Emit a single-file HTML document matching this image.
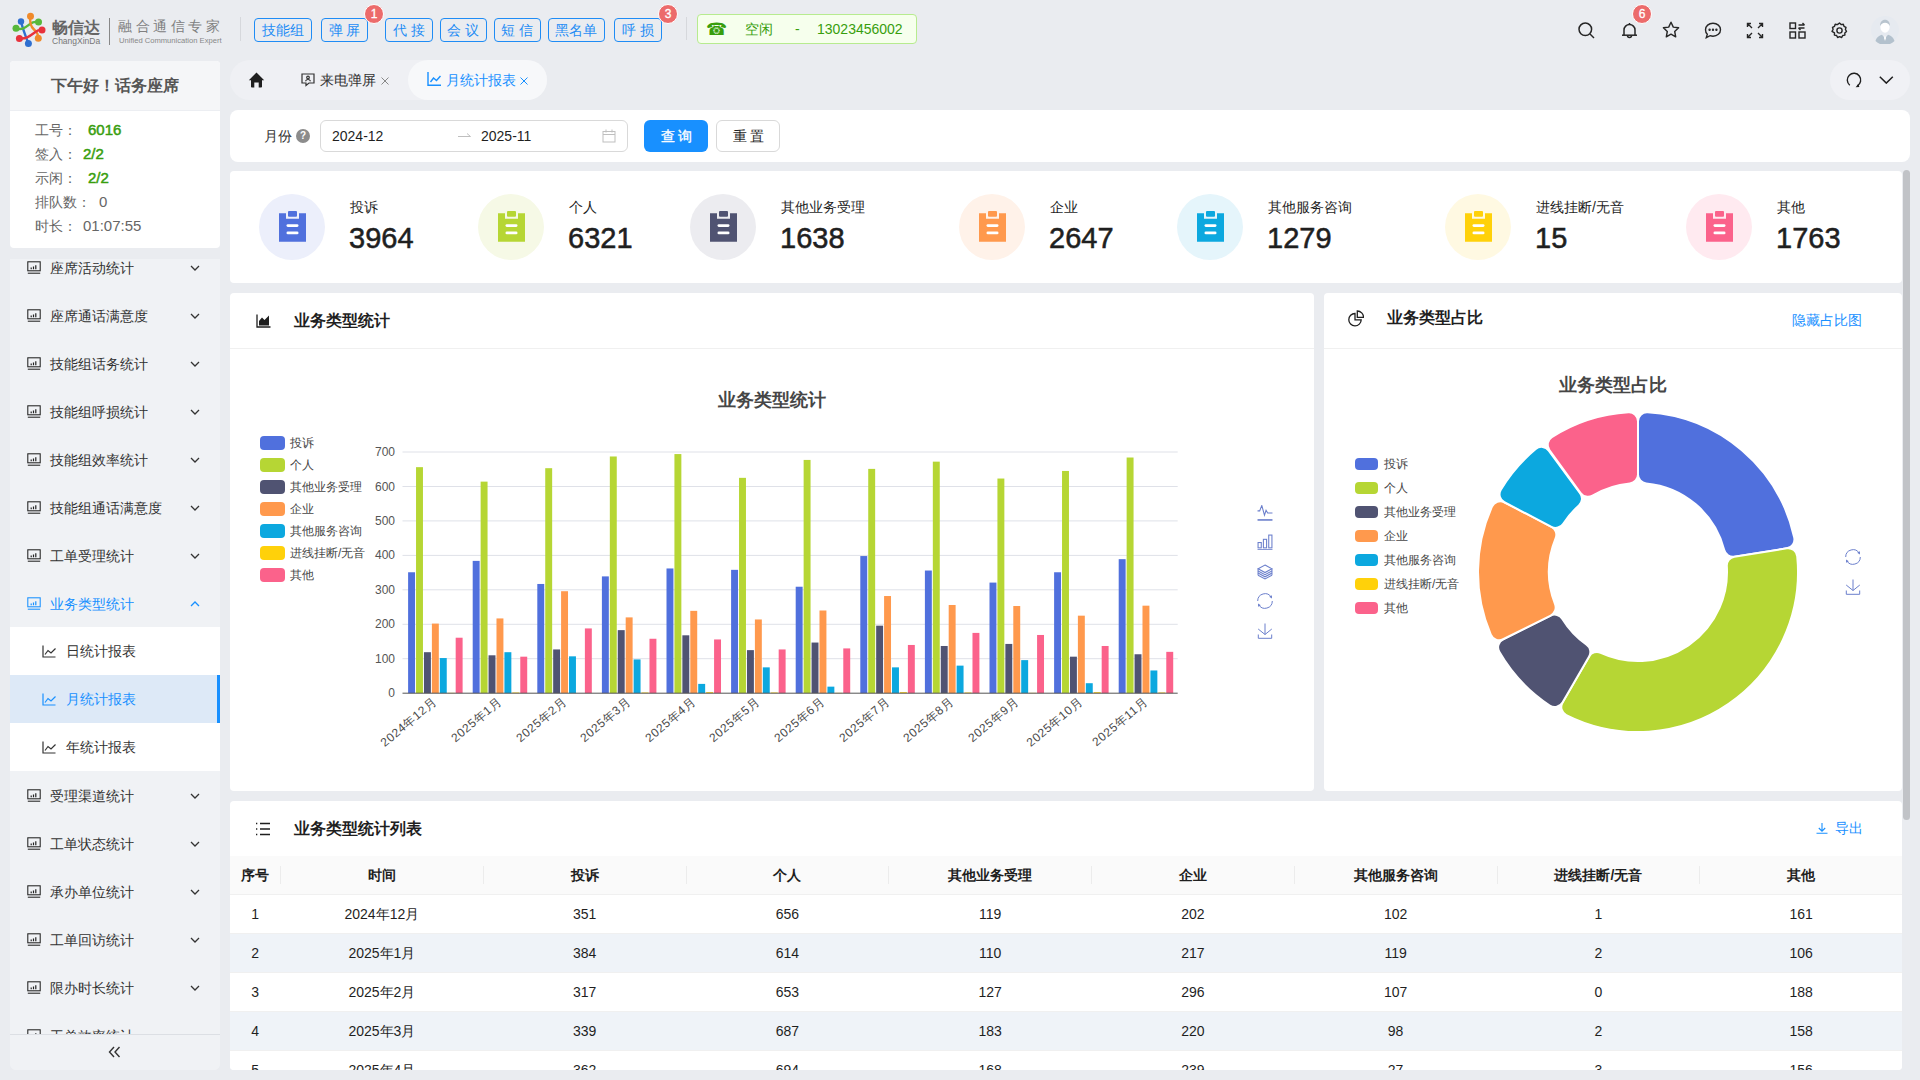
<!DOCTYPE html><html><head><meta charset="utf-8"><style>
*{margin:0;padding:0;box-sizing:border-box}
svg{display:block}
html,body{width:1920px;height:1080px;overflow:hidden}
body{background:#eaecf0;font-family:"Liberation Sans",sans-serif;color:#333;position:relative;font-size:14px}
.a{position:absolute}
.nw{white-space:nowrap}
.hbtn{position:absolute;top:18px;height:24px;border:1px solid #1f8cf5;border-radius:4px;color:#1f8cf5;font-size:14px;line-height:22px;text-align:center;white-space:nowrap}
.badge{position:absolute;width:20px;height:20px;border-radius:10px;background:#ec6b6b;border:1px solid #fff;color:#fff;font-size:12px;line-height:18px;text-align:center;-webkit-text-stroke:0.3px #fff}
.card{position:absolute;background:#fff;border-radius:4px}
.mi{position:absolute;left:10px;width:210px;height:48px}
.mi .ic{position:absolute;left:17px;top:16.5px}
.mi .tx{position:absolute;left:40px;top:0;line-height:48px;font-size:14px;color:#333;white-space:nowrap}
.mi .chev{position:absolute;left:180px;top:20.5px}
.si{position:absolute;left:10px;width:210px;height:48px;background:#fff}
.si .ic{position:absolute;left:32px;top:18px}
.si .tx{position:absolute;left:56px;top:0;line-height:48px;font-size:14px;color:#333;white-space:nowrap}
.th{position:absolute;top:856px;height:38px;line-height:38px;text-align:center;font-weight:bold;font-size:14px;color:#1f1f1f;white-space:nowrap}
.td{position:absolute;height:39px;line-height:39px;text-align:center;font-size:14px;color:#1f1f1f;white-space:nowrap}
.lg{position:absolute;font-size:12px;color:#464646;white-space:nowrap;line-height:14px}
.lg i{position:absolute;width:25px;height:14px;border-radius:4px;left:0;top:0}
.lg span{position:absolute;left:30px;top:0}
</style></head><body>
<svg class="a" style="left:10px;top:11px" width="40" height="40" viewBox="10 11 40 40">
<path d="M21 21.5 C23 30, 25 34, 28.4 43.6" stroke="#2f6fd0" stroke-width="2.4" fill="none"/>
<path d="M16 28.3 C22 30.5, 26 27, 30 24 S35 22, 38.5 22" stroke="#58b83a" stroke-width="2.4" fill="none"/>
<path d="M30.5 16.3 C29.5 22, 30 26, 34 29.5 S38 35, 38.3 38.3" stroke="#f08a2a" stroke-width="2.4" fill="none"/>
<path d="M19.4 38.4 C26 39, 30 36, 34 33 S38.5 30, 42 30" stroke="#e8323c" stroke-width="2.4" fill="none"/>
<circle cx="30.5" cy="16.3" r="3.5" fill="#f08a2a"/><circle cx="21" cy="21.5" r="3.2" fill="#2f6fd0"/>
<circle cx="16" cy="28.3" r="3.5" fill="#58b83a"/><circle cx="38.5" cy="22" r="3.5" fill="#58b83a"/>
<circle cx="42" cy="30" r="3.5" fill="#e8323c"/><circle cx="38.3" cy="38.3" r="3.5" fill="#f08a2a"/>
<circle cx="19.4" cy="38.4" r="3.5" fill="#e8323c"/><circle cx="28.4" cy="43.6" r="3.5" fill="#2f6fd0"/>
</svg>
<div class="a nw" style="left:52px;top:17px;font-size:16px;font-weight:bold;color:#666;line-height:22px;letter-spacing:0px">畅信达</div>
<div class="a nw" style="left:52px;top:36px;font-size:8.5px;color:#777;line-height:10px">ChangXinDa</div>
<div class="a" style="left:109px;top:18px;width:1px;height:27px;background:#888"></div>
<div class="a nw" style="left:118px;top:17px;font-family:'Liberation Serif',serif;font-size:14px;color:#808080;line-height:20px;letter-spacing:3.5px">融合通信专家</div>
<div class="a nw" style="left:119px;top:36px;font-size:7.6px;color:#888;line-height:10px">Unified Communication Expert</div>
<div class="a" style="left:240px;top:17px;width:1px;height:24px;background:#d6d8dc"></div>
<div class="hbtn" style="left:254px;width:58px">技能组</div>
<div class="hbtn" style="left:321px;width:47px">弹 屏</div>
<div class="hbtn" style="left:385px;width:48px">代 接</div>
<div class="hbtn" style="left:439.5px;width:47px">会 议</div>
<div class="hbtn" style="left:493.5px;width:47px">短 信</div>
<div class="hbtn" style="left:547.5px;width:57px">黑名单</div>
<div class="hbtn" style="left:614px;width:48px">呼 损</div>
<div class="badge" style="left:364px;top:4px">1</div>
<div class="badge" style="left:658px;top:4px">3</div>
<div class="a" style="left:686px;top:17px;width:1px;height:23px;background:#d6d8dc"></div>
<div class="a" style="left:697px;top:14px;width:220px;height:30px;background:#f6ffed;border:1px solid #b7eb8f;border-radius:4px"></div>
<div class="a nw" style="left:706px;top:20px;font-size:17px;color:#389e0d;line-height:20px">☎</div>
<div class="a nw" style="left:745px;top:19px;font-size:14px;color:#389e0d;line-height:20px">空闲</div>
<div class="a nw" style="left:795px;top:19px;font-size:14px;color:#389e0d;line-height:20px">-</div>
<div class="a nw" style="left:817px;top:19px;font-size:14px;color:#389e0d;line-height:20px">13023456002</div>
<svg class="a" style="left:1578px;top:22px" width="17" height="17" viewBox="0 0 17 17" fill="none" stroke="#262626" stroke-width="1.5"><circle cx="7.3" cy="7.3" r="6.3"/><path d="M12 12l4 4"/></svg>
<svg class="a" style="left:1621px;top:22px" width="17" height="17" viewBox="0 0 17 17" fill="none" stroke="#262626" stroke-width="1.5"><path d="M3 13V8a5.5 5.5 0 0 1 11 0v5"/><path d="M1 13.2h15"/><path d="M6.5 13.5a2 2 0 0 0 4 0"/><path d="M8.5 1v1.5"/></svg>
<div class="badge" style="left:1632px;top:4px">6</div>
<svg class="a" style="left:1662px;top:21px" width="18" height="17" viewBox="0 0 18 17" fill="none" stroke="#262626" stroke-width="1.4" stroke-linejoin="round"><path d="M9 1.2l2.3 4.9 5.3.7-3.9 3.7 1 5.3L9 13.2l-4.7 2.6 1-5.3L1.4 6.8l5.3-.7z"/></svg>
<svg class="a" style="left:1704px;top:22px" width="18" height="17" viewBox="0 0 18 17" fill="none" stroke="#262626" stroke-width="1.4"><path d="M9 1.2c4.3 0 7.5 2.9 7.5 6.5S13.3 14.2 9 14.2c-1 0-2-.2-2.9-.5L2.3 15.6l1-3.3C2 11.1 1.5 9.5 1.5 7.7 1.5 4.1 4.7 1.2 9 1.2z"/><circle cx="5.6" cy="7.8" r=".5" fill="#262626"/><circle cx="9" cy="7.8" r=".5" fill="#262626"/><circle cx="12.4" cy="7.8" r=".5" fill="#262626"/></svg>
<svg class="a" style="left:1746px;top:22px" width="18" height="17" viewBox="0 0 18 17" fill="none" stroke="#262626" stroke-width="1.4"><path d="M1.5 5V1.5H5M1.5 1.5l4.5 4.5M16.5 5V1.5H13M16.5 1.5L12 6M1.5 12v3.5H5M1.5 15.5L6 11M16.5 12v3.5H13M16.5 15.5L12 11"/></svg>
<svg class="a" style="left:1789px;top:22px" width="17" height="17" viewBox="0 0 17 17" fill="none" stroke="#262626" stroke-width="1.4"><rect x="1" y="1" width="5.5" height="5.5"/><rect x="1" y="10" width="5.5" height="6"/><rect x="10" y="10" width="6" height="6"/><path d="M9.5 3h6M9.5 6h6M13.5 1l2 2M11.5 8l-2-2"/></svg>
<svg class="a" style="left:1831px;top:22px" width="17" height="17" viewBox="0 0 17 17" fill="none" stroke="#262626" stroke-width="1.4"><path d="M8.5 1l1.6 1.6 2.2-.4.7 2.1 2 1-.6 2.2 1.1 1.9-1.7 1.5.1 2.2-2.2.4-1 2-2.1-.8-2 .8-1-2-2.2-.4.1-2.2L1 9.4l1.1-1.9-.6-2.2 2-1 .7-2.1 2.2.4z" stroke-linejoin="round"/><circle cx="8.5" cy="8.5" r="2.6"/></svg>
<svg class="a" style="left:1871px;top:16px" width="28" height="28" viewBox="0 0 28 28"><circle cx="14" cy="14" r="14" fill="#e6eaf0"/><path d="M4.5 25c1-4 4-5.5 6.5-6.3l3 3.5 3-3.5c2.5.8 5.5 2.3 6.5 6.3A13.5 13.5 0 0 1 4.5 25z" fill="#b3c1cd"/><path d="M13 22l1-2.5 1 2.5-1 3z" fill="#fff"/><ellipse cx="14" cy="11" rx="4.6" ry="5.8" fill="#fff"/><path d="M9 10c0-4 2-6.3 5-6.3s5 2.3 5 6.3c-1-1.8-2.5-3-5-3.2-2.2.2-4 1.2-5 3.2z" fill="#b8c4ce"/></svg>
<div class="a" style="left:10px;top:61px;width:209.5px;height:187px;background:#fff;border-radius:4px;overflow:hidden"><div class="a" style="left:0;top:0;width:210px;height:50px;background:#f5f6f8;border-bottom:1px solid #eceef2"></div><div class="a nw" style="left:0;top:14px;width:210px;text-align:center;font-size:16px;font-weight:bold;color:#555;line-height:22px">下午好！话务座席</div></div>
<div class="a nw" style="left:35px;top:119px;font-size:14px;color:#666;line-height:22px">工号：</div>
<div class="a nw" style="left:88px;top:119px;font-size:15px;color:#389e0d;-webkit-text-stroke:0.5px #389e0d;line-height:22px">6016</div>
<div class="a nw" style="left:35px;top:143px;font-size:14px;color:#666;line-height:22px">签入：</div>
<div class="a nw" style="left:83px;top:143px;font-size:15px;color:#389e0d;-webkit-text-stroke:0.5px #389e0d;line-height:22px">2/2</div>
<div class="a nw" style="left:35px;top:167px;font-size:14px;color:#666;line-height:22px">示闲：</div>
<div class="a nw" style="left:88px;top:167px;font-size:15px;color:#389e0d;-webkit-text-stroke:0.5px #389e0d;line-height:22px">2/2</div>
<div class="a nw" style="left:35px;top:191px;font-size:14px;color:#666;line-height:22px">排队数：</div>
<div class="a nw" style="left:99px;top:191px;font-size:15px;color:#666;line-height:22px">0</div>
<div class="a nw" style="left:35px;top:215px;font-size:14px;color:#666;line-height:22px">时长：</div>
<div class="a nw" style="left:83px;top:215px;font-size:15px;color:#666;line-height:22px">01:07:55</div>
<div class="a" style="left:10px;top:259px;width:210px;height:811px;background:#f0f2f5;border-radius:0 0 6px 6px;overflow:hidden"></div>
<div class="mi" style="top:244px"><div class="ic"><svg width="14" height="13" viewBox="0 0 14 13" fill="none" stroke="#222" stroke-width="1.05"><rect x="0.8" y="0.8" width="12.4" height="9"/><path d="M0.8 12.2h12.4"/><path d="M4.2 8.2v-1.6M6.5 8.2v-2.8M8.8 8.2v-4" stroke-width="1.2"/></svg></div><div class="tx">座席活动统计</div><div class="chev"><svg width="10" height="6" viewBox="0 0 10 6" fill="none" stroke="#333" stroke-width="1.3"><path d="M1 1l4 4 4-4"/></svg></div></div>
<div class="mi" style="top:292px"><div class="ic"><svg width="14" height="13" viewBox="0 0 14 13" fill="none" stroke="#222" stroke-width="1.05"><rect x="0.8" y="0.8" width="12.4" height="9"/><path d="M0.8 12.2h12.4"/><path d="M4.2 8.2v-1.6M6.5 8.2v-2.8M8.8 8.2v-4" stroke-width="1.2"/></svg></div><div class="tx">座席通话满意度</div><div class="chev"><svg width="10" height="6" viewBox="0 0 10 6" fill="none" stroke="#333" stroke-width="1.3"><path d="M1 1l4 4 4-4"/></svg></div></div>
<div class="mi" style="top:340px"><div class="ic"><svg width="14" height="13" viewBox="0 0 14 13" fill="none" stroke="#222" stroke-width="1.05"><rect x="0.8" y="0.8" width="12.4" height="9"/><path d="M0.8 12.2h12.4"/><path d="M4.2 8.2v-1.6M6.5 8.2v-2.8M8.8 8.2v-4" stroke-width="1.2"/></svg></div><div class="tx">技能组话务统计</div><div class="chev"><svg width="10" height="6" viewBox="0 0 10 6" fill="none" stroke="#333" stroke-width="1.3"><path d="M1 1l4 4 4-4"/></svg></div></div>
<div class="mi" style="top:388px"><div class="ic"><svg width="14" height="13" viewBox="0 0 14 13" fill="none" stroke="#222" stroke-width="1.05"><rect x="0.8" y="0.8" width="12.4" height="9"/><path d="M0.8 12.2h12.4"/><path d="M4.2 8.2v-1.6M6.5 8.2v-2.8M8.8 8.2v-4" stroke-width="1.2"/></svg></div><div class="tx">技能组呼损统计</div><div class="chev"><svg width="10" height="6" viewBox="0 0 10 6" fill="none" stroke="#333" stroke-width="1.3"><path d="M1 1l4 4 4-4"/></svg></div></div>
<div class="mi" style="top:436px"><div class="ic"><svg width="14" height="13" viewBox="0 0 14 13" fill="none" stroke="#222" stroke-width="1.05"><rect x="0.8" y="0.8" width="12.4" height="9"/><path d="M0.8 12.2h12.4"/><path d="M4.2 8.2v-1.6M6.5 8.2v-2.8M8.8 8.2v-4" stroke-width="1.2"/></svg></div><div class="tx">技能组效率统计</div><div class="chev"><svg width="10" height="6" viewBox="0 0 10 6" fill="none" stroke="#333" stroke-width="1.3"><path d="M1 1l4 4 4-4"/></svg></div></div>
<div class="mi" style="top:484px"><div class="ic"><svg width="14" height="13" viewBox="0 0 14 13" fill="none" stroke="#222" stroke-width="1.05"><rect x="0.8" y="0.8" width="12.4" height="9"/><path d="M0.8 12.2h12.4"/><path d="M4.2 8.2v-1.6M6.5 8.2v-2.8M8.8 8.2v-4" stroke-width="1.2"/></svg></div><div class="tx">技能组通话满意度</div><div class="chev"><svg width="10" height="6" viewBox="0 0 10 6" fill="none" stroke="#333" stroke-width="1.3"><path d="M1 1l4 4 4-4"/></svg></div></div>
<div class="mi" style="top:532px"><div class="ic"><svg width="14" height="13" viewBox="0 0 14 13" fill="none" stroke="#222" stroke-width="1.05"><rect x="0.8" y="0.8" width="12.4" height="9"/><path d="M0.8 12.2h12.4"/><path d="M4.2 8.2v-1.6M6.5 8.2v-2.8M8.8 8.2v-4" stroke-width="1.2"/></svg></div><div class="tx">工单受理统计</div><div class="chev"><svg width="10" height="6" viewBox="0 0 10 6" fill="none" stroke="#333" stroke-width="1.3"><path d="M1 1l4 4 4-4"/></svg></div></div>
<div class="mi" style="top:580px"><div class="ic"><svg width="14" height="13" viewBox="0 0 14 13" fill="none" stroke="#1890ff" stroke-width="1.05"><rect x="0.8" y="0.8" width="12.4" height="9"/><path d="M0.8 12.2h12.4"/><path d="M4.2 8.2v-1.6M6.5 8.2v-2.8M8.8 8.2v-4" stroke-width="1.2"/></svg></div><div class="tx" style="color:#1890ff">业务类型统计</div><div class="chev"><svg width="10" height="6" viewBox="0 0 10 6" fill="none" stroke="#1890ff" stroke-width="1.3"><path d="M1 5l4-4 4 4"/></svg></div></div>
<div class="a" style="left:10px;top:627px;width:210px;height:144px;background:#fff"></div>
<div class="si" style="top:627px"><div class="ic"><svg width="14" height="13" viewBox="0 0 14 13" fill="none" stroke="#333" stroke-width="1.2"><path d="M1 0.5V12h12.5"/><path d="M3 9.5l3-4 3 2.5 4.5-4.5"/></svg></div><div class="tx">日统计报表</div></div>
<div class="si" style="top:675px;background:#dde9f7"><div class="ic"><svg width="14" height="13" viewBox="0 0 14 13" fill="none" stroke="#1890ff" stroke-width="1.2"><path d="M1 0.5V12h12.5"/><path d="M3 9.5l3-4 3 2.5 4.5-4.5"/></svg></div><div class="tx" style="color:#1890ff">月统计报表</div><div class="a" style="right:0;top:0;width:3px;height:48px;background:#1890ff"></div></div>
<div class="si" style="top:723px"><div class="ic"><svg width="14" height="13" viewBox="0 0 14 13" fill="none" stroke="#333" stroke-width="1.2"><path d="M1 0.5V12h12.5"/><path d="M3 9.5l3-4 3 2.5 4.5-4.5"/></svg></div><div class="tx">年统计报表</div></div>
<div class="mi" style="top:772px"><div class="ic"><svg width="14" height="13" viewBox="0 0 14 13" fill="none" stroke="#222" stroke-width="1.05"><rect x="0.8" y="0.8" width="12.4" height="9"/><path d="M0.8 12.2h12.4"/><path d="M4.2 8.2v-1.6M6.5 8.2v-2.8M8.8 8.2v-4" stroke-width="1.2"/></svg></div><div class="tx">受理渠道统计</div><div class="chev"><svg width="10" height="6" viewBox="0 0 10 6" fill="none" stroke="#333" stroke-width="1.3"><path d="M1 1l4 4 4-4"/></svg></div></div>
<div class="mi" style="top:820px"><div class="ic"><svg width="14" height="13" viewBox="0 0 14 13" fill="none" stroke="#222" stroke-width="1.05"><rect x="0.8" y="0.8" width="12.4" height="9"/><path d="M0.8 12.2h12.4"/><path d="M4.2 8.2v-1.6M6.5 8.2v-2.8M8.8 8.2v-4" stroke-width="1.2"/></svg></div><div class="tx">工单状态统计</div><div class="chev"><svg width="10" height="6" viewBox="0 0 10 6" fill="none" stroke="#333" stroke-width="1.3"><path d="M1 1l4 4 4-4"/></svg></div></div>
<div class="mi" style="top:868px"><div class="ic"><svg width="14" height="13" viewBox="0 0 14 13" fill="none" stroke="#222" stroke-width="1.05"><rect x="0.8" y="0.8" width="12.4" height="9"/><path d="M0.8 12.2h12.4"/><path d="M4.2 8.2v-1.6M6.5 8.2v-2.8M8.8 8.2v-4" stroke-width="1.2"/></svg></div><div class="tx">承办单位统计</div><div class="chev"><svg width="10" height="6" viewBox="0 0 10 6" fill="none" stroke="#333" stroke-width="1.3"><path d="M1 1l4 4 4-4"/></svg></div></div>
<div class="mi" style="top:916px"><div class="ic"><svg width="14" height="13" viewBox="0 0 14 13" fill="none" stroke="#222" stroke-width="1.05"><rect x="0.8" y="0.8" width="12.4" height="9"/><path d="M0.8 12.2h12.4"/><path d="M4.2 8.2v-1.6M6.5 8.2v-2.8M8.8 8.2v-4" stroke-width="1.2"/></svg></div><div class="tx">工单回访统计</div><div class="chev"><svg width="10" height="6" viewBox="0 0 10 6" fill="none" stroke="#333" stroke-width="1.3"><path d="M1 1l4 4 4-4"/></svg></div></div>
<div class="mi" style="top:964px"><div class="ic"><svg width="14" height="13" viewBox="0 0 14 13" fill="none" stroke="#222" stroke-width="1.05"><rect x="0.8" y="0.8" width="12.4" height="9"/><path d="M0.8 12.2h12.4"/><path d="M4.2 8.2v-1.6M6.5 8.2v-2.8M8.8 8.2v-4" stroke-width="1.2"/></svg></div><div class="tx">限办时长统计</div><div class="chev"><svg width="10" height="6" viewBox="0 0 10 6" fill="none" stroke="#333" stroke-width="1.3"><path d="M1 1l4 4 4-4"/></svg></div></div>
<div class="mi" style="top:1012px"><div class="ic"><svg width="14" height="13" viewBox="0 0 14 13" fill="none" stroke="#222" stroke-width="1.05"><rect x="0.8" y="0.8" width="12.4" height="9"/><path d="M0.8 12.2h12.4"/><path d="M4.2 8.2v-1.6M6.5 8.2v-2.8M8.8 8.2v-4" stroke-width="1.2"/></svg></div><div class="tx">工单效率统计</div><div class="chev"></div></div>
<div class="a" style="left:10px;top:1034px;width:210px;height:36px;background:#f0f2f5;border-top:1px solid #dcdfe4;border-radius:0 0 6px 6px"></div>
<svg class="a" style="left:108px;top:1046px" width="13" height="12" viewBox="0 0 13 12" fill="none" stroke="#333" stroke-width="1.4"><path d="M6 1L1.5 6 6 11M11.5 1L7 6l4.5 5"/></svg>
<div class="a" style="left:230px;top:60px;width:317px;height:40px;background:#eff0f4;border-radius:20px"></div>
<div class="a" style="left:408px;top:60px;width:139px;height:40px;background:#f7f8fa;border-radius:20px"></div>
<svg class="a" style="left:248px;top:72px" width="17" height="16" viewBox="0 0 17 16"><path d="M8.5 0.5L0.8 8.3h2.2v6.5c0 .5.4.8.8.8h2.5V10.5h4.4v5.1h2.5c.4 0 .8-.3.8-.8V8.3h2.2z" fill="#1f1f1f"/></svg>
<svg class="a" style="left:301px;top:73px" width="14" height="14" viewBox="0 0 14 14" fill="none" stroke="#333" stroke-width="1.2"><path d="M1 1h12v9H8l-3 2.5V10H1z"/><circle cx="7" cy="4.5" r="1.3"/><path d="M4.5 8.2c.5-1.2 1.4-1.7 2.5-1.7s2 .5 2.5 1.7"/></svg>
<div class="a nw" style="left:320px;top:70px;font-size:14px;color:#333;line-height:20px">来电弹屏</div>
<svg class="a" style="left:381px;top:77px" width="8" height="8" viewBox="0 0 8 8" stroke="#888" stroke-width="1"><path d="M0.5 .5l7 7M7.5 .5l-7 7"/></svg>
<svg class="a" style="left:427px;top:72px" width="14" height="14" viewBox="0 0 14 14" fill="none" stroke="#1890ff" stroke-width="1.4"><path d="M1 0v13.3h13"/><path d="M3.5 10l3-4 3 2.5 4-4.5"/></svg>
<div class="a nw" style="left:446px;top:70px;font-size:14px;color:#1890ff;line-height:20px">月统计报表</div>
<svg class="a" style="left:520px;top:77px" width="8" height="8" viewBox="0 0 8 8" stroke="#1890ff" stroke-width="1"><path d="M0.5 .5l7 7M7.5 .5l-7 7"/></svg>
<div class="a" style="left:1830px;top:60px;width:80px;height:40px;background:#f0f1f5;border-radius:20px"></div>
<svg class="a" style="left:1846px;top:72px" width="16" height="16" viewBox="0 0 16 16" fill="none" stroke="#1f1f1f" stroke-width="1.4"><path d="M3.78 13.21A6.7 6.7 0 1 1 11.35 13.8"/><path d="M9.6 15.2L13.3 15.1 12.6 11.5z" fill="#1f1f1f" stroke="none"/></svg>
<svg class="a" style="left:1879px;top:76px" width="15" height="8" viewBox="0 0 15 8" fill="none" stroke="#1f1f1f" stroke-width="1.5"><path d="M0.8 0.8l6.5 6.3L13.8 0.8"/></svg>
<div class="card" style="left:230px;top:110px;width:1680px;height:52px;border-radius:8px"></div>
<div class="a nw" style="left:264px;top:126px;font-size:14px;color:#333;line-height:20px">月份</div>
<div class="a" style="left:296px;top:129px;width:14px;height:14px;border-radius:7px;background:#8c8c8c;color:#fff;font-size:10px;line-height:14px;text-align:center;font-weight:bold">?</div>
<div class="a" style="left:320px;top:120px;width:308px;height:32px;border:1px solid #d9d9d9;border-radius:6px;background:#fff"></div>
<div class="a nw" style="left:332px;top:126px;font-size:14px;color:#1f1f1f;line-height:20px">2024-12</div>
<svg class="a" style="left:458px;top:131px" width="13" height="8" viewBox="0 0 13 8" fill="none" stroke="#bfbfbf" stroke-width="1"><path d="M0 5.5h12.5M9 2.5l3.5 3"/></svg>
<div class="a nw" style="left:481px;top:126px;font-size:14px;color:#1f1f1f;line-height:20px">2025-11</div>
<svg class="a" style="left:602px;top:129px" width="14" height="14" viewBox="0 0 14 14" fill="none" stroke="#bfbfbf" stroke-width="1"><rect x="1" y="2.5" width="12" height="10.5"/><path d="M1 5.5h12M4 0.5v3M10 0.5v3"/></svg>
<div class="a nw" style="left:644px;top:120px;width:64px;height:32px;background:#1890ff;border-radius:6px;color:#fff;font-size:14px;line-height:32px;text-align:center;-webkit-text-stroke:0.35px #fff;letter-spacing:3px;text-indent:3px">查询</div>
<div class="a nw" style="left:716px;top:120px;width:64px;height:32px;background:#fff;border:1px solid #d9d9d9;border-radius:6px;color:#1f1f1f;font-size:14px;line-height:30px;text-align:center;letter-spacing:3px;text-indent:3px">重置</div>
<div class="card" style="left:230px;top:171px;width:1672px;height:112px"></div>
<div class="a" style="left:259px;top:194px;width:66px;height:66px;border-radius:33px;background:#eceffb"></div>
<div class="a" style="left:279px;top:211px"><svg width="27" height="31" viewBox="0 0 27 31"><path d="M0 2.2h7v5.6h13V2.2h7V30.7H0z" fill="#5070dd"/><rect x="9" y="0" width="9" height="5.7" rx="1" fill="#5070dd"/><rect x="7.5" y="13.3" width="12" height="2.6" rx="1.3" fill="#fff"/><rect x="7.5" y="20.6" width="12" height="2.6" rx="1.3" fill="#fff"/></svg></div>
<div class="a nw" style="left:350px;top:197px;font-size:14px;color:#1f1f1f;line-height:20px">投诉</div>
<div class="a nw" style="left:349px;top:220px;font-size:29px;color:#1f1f1f;line-height:36px;-webkit-text-stroke:0.55px #1f1f1f">3964</div>
<div class="a" style="left:478px;top:194px;width:66px;height:66px;border-radius:33px;background:#f6f9e6"></div>
<div class="a" style="left:498px;top:211px"><svg width="27" height="31" viewBox="0 0 27 31"><path d="M0 2.2h7v5.6h13V2.2h7V30.7H0z" fill="#b6d634"/><rect x="9" y="0" width="9" height="5.7" rx="1" fill="#b6d634"/><rect x="7.5" y="13.3" width="12" height="2.6" rx="1.3" fill="#fff"/><rect x="7.5" y="20.6" width="12" height="2.6" rx="1.3" fill="#fff"/></svg></div>
<div class="a nw" style="left:569px;top:197px;font-size:14px;color:#1f1f1f;line-height:20px">个人</div>
<div class="a nw" style="left:568px;top:220px;font-size:29px;color:#1f1f1f;line-height:36px;-webkit-text-stroke:0.55px #1f1f1f">6321</div>
<div class="a" style="left:690px;top:194px;width:66px;height:66px;border-radius:33px;background:#ececf0"></div>
<div class="a" style="left:710px;top:211px"><svg width="27" height="31" viewBox="0 0 27 31"><path d="M0 2.2h7v5.6h13V2.2h7V30.7H0z" fill="#505372"/><rect x="9" y="0" width="9" height="5.7" rx="1" fill="#505372"/><rect x="7.5" y="13.3" width="12" height="2.6" rx="1.3" fill="#fff"/><rect x="7.5" y="20.6" width="12" height="2.6" rx="1.3" fill="#fff"/></svg></div>
<div class="a nw" style="left:781px;top:197px;font-size:14px;color:#1f1f1f;line-height:20px">其他业务受理</div>
<div class="a nw" style="left:780px;top:220px;font-size:29px;color:#1f1f1f;line-height:36px;-webkit-text-stroke:0.55px #1f1f1f">1638</div>
<div class="a" style="left:959px;top:194px;width:66px;height:66px;border-radius:33px;background:#fff2e9"></div>
<div class="a" style="left:979px;top:211px"><svg width="27" height="31" viewBox="0 0 27 31"><path d="M0 2.2h7v5.6h13V2.2h7V30.7H0z" fill="#ff994d"/><rect x="9" y="0" width="9" height="5.7" rx="1" fill="#ff994d"/><rect x="7.5" y="13.3" width="12" height="2.6" rx="1.3" fill="#fff"/><rect x="7.5" y="20.6" width="12" height="2.6" rx="1.3" fill="#fff"/></svg></div>
<div class="a nw" style="left:1050px;top:197px;font-size:14px;color:#1f1f1f;line-height:20px">企业</div>
<div class="a nw" style="left:1049px;top:220px;font-size:29px;color:#1f1f1f;line-height:36px;-webkit-text-stroke:0.55px #1f1f1f">2647</div>
<div class="a" style="left:1177px;top:194px;width:66px;height:66px;border-radius:33px;background:#e5f5fb"></div>
<div class="a" style="left:1197px;top:211px"><svg width="27" height="31" viewBox="0 0 27 31"><path d="M0 2.2h7v5.6h13V2.2h7V30.7H0z" fill="#0ca8df"/><rect x="9" y="0" width="9" height="5.7" rx="1" fill="#0ca8df"/><rect x="7.5" y="13.3" width="12" height="2.6" rx="1.3" fill="#fff"/><rect x="7.5" y="20.6" width="12" height="2.6" rx="1.3" fill="#fff"/></svg></div>
<div class="a nw" style="left:1268px;top:197px;font-size:14px;color:#1f1f1f;line-height:20px">其他服务咨询</div>
<div class="a nw" style="left:1267px;top:220px;font-size:29px;color:#1f1f1f;line-height:36px;-webkit-text-stroke:0.55px #1f1f1f">1279</div>
<div class="a" style="left:1445px;top:194px;width:66px;height:66px;border-radius:33px;background:#fff9e2"></div>
<div class="a" style="left:1465px;top:211px"><svg width="27" height="31" viewBox="0 0 27 31"><path d="M0 2.2h7v5.6h13V2.2h7V30.7H0z" fill="#ffd10a"/><rect x="9" y="0" width="9" height="5.7" rx="1" fill="#ffd10a"/><rect x="7.5" y="13.3" width="12" height="2.6" rx="1.3" fill="#fff"/><rect x="7.5" y="20.6" width="12" height="2.6" rx="1.3" fill="#fff"/></svg></div>
<div class="a nw" style="left:1536px;top:197px;font-size:14px;color:#1f1f1f;line-height:20px">进线挂断/无音</div>
<div class="a nw" style="left:1535px;top:220px;font-size:29px;color:#1f1f1f;line-height:36px;-webkit-text-stroke:0.55px #1f1f1f">15</div>
<div class="a" style="left:1686px;top:194px;width:66px;height:66px;border-radius:33px;background:#ffeaf0"></div>
<div class="a" style="left:1706px;top:211px"><svg width="27" height="31" viewBox="0 0 27 31"><path d="M0 2.2h7v5.6h13V2.2h7V30.7H0z" fill="#fb628b"/><rect x="9" y="0" width="9" height="5.7" rx="1" fill="#fb628b"/><rect x="7.5" y="13.3" width="12" height="2.6" rx="1.3" fill="#fff"/><rect x="7.5" y="20.6" width="12" height="2.6" rx="1.3" fill="#fff"/></svg></div>
<div class="a nw" style="left:1777px;top:197px;font-size:14px;color:#1f1f1f;line-height:20px">其他</div>
<div class="a nw" style="left:1776px;top:220px;font-size:29px;color:#1f1f1f;line-height:36px;-webkit-text-stroke:0.55px #1f1f1f">1763</div>
<div class="a" style="left:1903px;top:170px;width:7px;height:650px;background:#c1c3c7;border-radius:4px"></div>
<div class="card" style="left:230px;top:293px;width:1084px;height:498px"></div>
<div class="a" style="left:230px;top:348px;width:1084px;height:1px;background:#f0f0f0"></div>
<svg class="a" style="left:256px;top:314px" width="15" height="14" viewBox="0 0 15 14"><path d="M1 0.5V13h13.5" fill="none" stroke="#1f1f1f" stroke-width="1.3"/><path d="M3 11.5V7l3-3.5 2.5 2.5L13 1.5v10z" fill="#1f1f1f"/></svg>
<div class="a nw" style="left:294px;top:310px;font-size:16px;font-weight:bold;color:#1f1f1f;line-height:22px">业务类型统计</div>
<div class="a nw" style="left:672px;top:388px;width:200px;text-align:center;font-size:18px;font-weight:bold;color:#464646;line-height:24px">业务类型统计</div>
<div class="lg" style="left:260px;top:436px"><i style="background:#5070dd"></i><span>投诉</span></div>
<div class="lg" style="left:260px;top:458px"><i style="background:#b6d634"></i><span>个人</span></div>
<div class="lg" style="left:260px;top:480px"><i style="background:#505372"></i><span>其他业务受理</span></div>
<div class="lg" style="left:260px;top:502px"><i style="background:#ff994d"></i><span>企业</span></div>
<div class="lg" style="left:260px;top:524px"><i style="background:#0ca8df"></i><span>其他服务咨询</span></div>
<div class="lg" style="left:260px;top:546px"><i style="background:#ffd10a"></i><span>进线挂断/无音</span></div>
<div class="lg" style="left:260px;top:568px"><i style="background:#fb628b"></i><span>其他</span></div>
<svg class="a" style="left:0;top:0" width="1920" height="1080" viewBox="0 0 1920 1080"><path d="M402.5 658.7H1177.7" stroke="#dfe1e8" stroke-width="1"/><path d="M402.5 624.3H1177.7" stroke="#dfe1e8" stroke-width="1"/><path d="M402.5 589.8H1177.7" stroke="#dfe1e8" stroke-width="1"/><path d="M402.5 555.4H1177.7" stroke="#dfe1e8" stroke-width="1"/><path d="M402.5 520.9H1177.7" stroke="#dfe1e8" stroke-width="1"/><path d="M402.5 486.5H1177.7" stroke="#dfe1e8" stroke-width="1"/><path d="M402.5 452.0H1177.7" stroke="#dfe1e8" stroke-width="1"/><rect x="408.10" y="572.26" width="6.93" height="120.94" fill="#5070dd"/><rect x="416.03" y="467.16" width="6.93" height="226.04" fill="#b6d634"/><rect x="423.96" y="652.20" width="6.93" height="41.00" fill="#505372"/><rect x="431.89" y="623.60" width="6.93" height="69.60" fill="#ff994d"/><rect x="439.82" y="658.05" width="6.93" height="35.15" fill="#0ca8df"/><rect x="447.75" y="692.86" width="6.93" height="0.34" fill="#ffd10a"/><rect x="455.68" y="637.72" width="6.93" height="55.48" fill="#fb628b"/><rect x="472.70" y="560.88" width="6.93" height="132.32" fill="#5070dd"/><rect x="480.63" y="481.63" width="6.93" height="211.57" fill="#b6d634"/><rect x="488.56" y="655.30" width="6.93" height="37.90" fill="#505372"/><rect x="496.49" y="618.43" width="6.93" height="74.77" fill="#ff994d"/><rect x="504.42" y="652.20" width="6.93" height="41.00" fill="#0ca8df"/><rect x="512.35" y="692.51" width="6.93" height="0.69" fill="#ffd10a"/><rect x="520.28" y="656.68" width="6.93" height="36.52" fill="#fb628b"/><rect x="537.30" y="583.97" width="6.93" height="109.23" fill="#5070dd"/><rect x="545.23" y="468.19" width="6.93" height="225.01" fill="#b6d634"/><rect x="553.16" y="649.44" width="6.93" height="43.76" fill="#505372"/><rect x="561.09" y="591.21" width="6.93" height="101.99" fill="#ff994d"/><rect x="569.02" y="656.33" width="6.93" height="36.87" fill="#0ca8df"/><rect x="584.88" y="628.42" width="6.93" height="64.78" fill="#fb628b"/><rect x="601.90" y="576.39" width="6.93" height="116.81" fill="#5070dd"/><rect x="609.83" y="456.48" width="6.93" height="236.72" fill="#b6d634"/><rect x="617.76" y="630.14" width="6.93" height="63.06" fill="#505372"/><rect x="625.69" y="617.39" width="6.93" height="75.81" fill="#ff994d"/><rect x="633.62" y="659.43" width="6.93" height="33.77" fill="#0ca8df"/><rect x="641.55" y="692.51" width="6.93" height="0.69" fill="#ffd10a"/><rect x="649.48" y="638.76" width="6.93" height="54.44" fill="#fb628b"/><rect x="666.50" y="568.47" width="6.93" height="124.73" fill="#5070dd"/><rect x="674.43" y="454.07" width="6.93" height="239.13" fill="#b6d634"/><rect x="682.36" y="635.31" width="6.93" height="57.89" fill="#505372"/><rect x="690.29" y="610.85" width="6.93" height="82.35" fill="#ff994d"/><rect x="698.22" y="683.90" width="6.93" height="9.30" fill="#0ca8df"/><rect x="706.15" y="692.17" width="6.93" height="1.03" fill="#ffd10a"/><rect x="714.08" y="639.45" width="6.93" height="53.75" fill="#fb628b"/><rect x="731.10" y="569.84" width="6.93" height="123.36" fill="#5070dd"/><rect x="739.03" y="477.84" width="6.93" height="215.36" fill="#b6d634"/><rect x="746.96" y="650.13" width="6.93" height="43.07" fill="#505372"/><rect x="754.89" y="619.46" width="6.93" height="73.74" fill="#ff994d"/><rect x="762.82" y="667.36" width="6.93" height="25.84" fill="#0ca8df"/><rect x="770.75" y="692.51" width="6.93" height="0.69" fill="#ffd10a"/><rect x="778.68" y="649.44" width="6.93" height="43.76" fill="#fb628b"/><rect x="795.70" y="586.73" width="6.93" height="106.47" fill="#5070dd"/><rect x="803.63" y="459.93" width="6.93" height="233.27" fill="#b6d634"/><rect x="811.56" y="642.55" width="6.93" height="50.65" fill="#505372"/><rect x="819.49" y="610.50" width="6.93" height="82.70" fill="#ff994d"/><rect x="827.42" y="686.65" width="6.93" height="6.55" fill="#0ca8df"/><rect x="835.35" y="692.86" width="6.93" height="0.34" fill="#ffd10a"/><rect x="843.28" y="648.41" width="6.93" height="44.79" fill="#fb628b"/><rect x="860.30" y="556.06" width="6.93" height="137.14" fill="#5070dd"/><rect x="868.23" y="468.88" width="6.93" height="224.32" fill="#b6d634"/><rect x="876.16" y="625.66" width="6.93" height="67.54" fill="#505372"/><rect x="884.09" y="596.03" width="6.93" height="97.17" fill="#ff994d"/><rect x="892.02" y="667.36" width="6.93" height="25.84" fill="#0ca8df"/><rect x="899.95" y="692.17" width="6.93" height="1.03" fill="#ffd10a"/><rect x="907.88" y="644.96" width="6.93" height="48.24" fill="#fb628b"/><rect x="924.90" y="570.53" width="6.93" height="122.67" fill="#5070dd"/><rect x="932.83" y="461.65" width="6.93" height="231.55" fill="#b6d634"/><rect x="940.76" y="645.99" width="6.93" height="47.21" fill="#505372"/><rect x="948.69" y="604.99" width="6.93" height="88.21" fill="#ff994d"/><rect x="956.62" y="665.63" width="6.93" height="27.57" fill="#0ca8df"/><rect x="964.55" y="692.51" width="6.93" height="0.69" fill="#ffd10a"/><rect x="972.48" y="632.90" width="6.93" height="60.30" fill="#fb628b"/><rect x="989.50" y="582.59" width="6.93" height="110.61" fill="#5070dd"/><rect x="997.43" y="478.53" width="6.93" height="214.67" fill="#b6d634"/><rect x="1005.36" y="643.93" width="6.93" height="49.27" fill="#505372"/><rect x="1013.29" y="606.02" width="6.93" height="87.18" fill="#ff994d"/><rect x="1021.22" y="660.12" width="6.93" height="33.08" fill="#0ca8df"/><rect x="1029.15" y="692.86" width="6.93" height="0.34" fill="#ffd10a"/><rect x="1037.08" y="634.97" width="6.93" height="58.23" fill="#fb628b"/><rect x="1054.10" y="572.26" width="6.93" height="120.94" fill="#5070dd"/><rect x="1062.03" y="470.95" width="6.93" height="222.25" fill="#b6d634"/><rect x="1069.96" y="656.68" width="6.93" height="36.52" fill="#505372"/><rect x="1077.89" y="615.67" width="6.93" height="77.53" fill="#ff994d"/><rect x="1085.82" y="683.21" width="6.93" height="9.99" fill="#0ca8df"/><rect x="1093.75" y="692.17" width="6.93" height="1.03" fill="#ffd10a"/><rect x="1101.68" y="645.99" width="6.93" height="47.21" fill="#fb628b"/><rect x="1118.70" y="559.16" width="6.93" height="134.04" fill="#5070dd"/><rect x="1126.63" y="457.51" width="6.93" height="235.69" fill="#b6d634"/><rect x="1134.56" y="654.26" width="6.93" height="38.94" fill="#505372"/><rect x="1142.49" y="605.68" width="6.93" height="87.52" fill="#ff994d"/><rect x="1150.42" y="670.46" width="6.93" height="22.74" fill="#0ca8df"/><rect x="1158.35" y="692.51" width="6.93" height="0.69" fill="#ffd10a"/><rect x="1166.28" y="651.85" width="6.93" height="41.35" fill="#fb628b"/><path d="M402.5 693.2H1177.7" stroke="#555" stroke-width="1"/></svg>
<div class="a nw" style="left:340px;top:685.2px;width:55px;text-align:right;font-size:12px;color:#555;line-height:16px">0</div>
<div class="a nw" style="left:340px;top:650.7px;width:55px;text-align:right;font-size:12px;color:#555;line-height:16px">100</div>
<div class="a nw" style="left:340px;top:616.3px;width:55px;text-align:right;font-size:12px;color:#555;line-height:16px">200</div>
<div class="a nw" style="left:340px;top:581.8px;width:55px;text-align:right;font-size:12px;color:#555;line-height:16px">300</div>
<div class="a nw" style="left:340px;top:547.4px;width:55px;text-align:right;font-size:12px;color:#555;line-height:16px">400</div>
<div class="a nw" style="left:340px;top:512.9px;width:55px;text-align:right;font-size:12px;color:#555;line-height:16px">500</div>
<div class="a nw" style="left:340px;top:478.5px;width:55px;text-align:right;font-size:12px;color:#555;line-height:16px">600</div>
<div class="a nw" style="left:340px;top:444.0px;width:55px;text-align:right;font-size:12px;color:#555;line-height:16px">700</div>
<div class="a nw" style="left:335.3px;top:692px;width:100px;text-align:right;font-size:12px;color:#4a4a4a;line-height:16px;letter-spacing:0.6px;transform-origin:100% 50%;transform:rotate(-40deg)">2024年12月</div>
<div class="a nw" style="left:399.9px;top:692px;width:100px;text-align:right;font-size:12px;color:#4a4a4a;line-height:16px;letter-spacing:0.6px;transform-origin:100% 50%;transform:rotate(-40deg)">2025年1月</div>
<div class="a nw" style="left:464.5px;top:692px;width:100px;text-align:right;font-size:12px;color:#4a4a4a;line-height:16px;letter-spacing:0.6px;transform-origin:100% 50%;transform:rotate(-40deg)">2025年2月</div>
<div class="a nw" style="left:529.1px;top:692px;width:100px;text-align:right;font-size:12px;color:#4a4a4a;line-height:16px;letter-spacing:0.6px;transform-origin:100% 50%;transform:rotate(-40deg)">2025年3月</div>
<div class="a nw" style="left:593.7px;top:692px;width:100px;text-align:right;font-size:12px;color:#4a4a4a;line-height:16px;letter-spacing:0.6px;transform-origin:100% 50%;transform:rotate(-40deg)">2025年4月</div>
<div class="a nw" style="left:658.3px;top:692px;width:100px;text-align:right;font-size:12px;color:#4a4a4a;line-height:16px;letter-spacing:0.6px;transform-origin:100% 50%;transform:rotate(-40deg)">2025年5月</div>
<div class="a nw" style="left:722.9px;top:692px;width:100px;text-align:right;font-size:12px;color:#4a4a4a;line-height:16px;letter-spacing:0.6px;transform-origin:100% 50%;transform:rotate(-40deg)">2025年6月</div>
<div class="a nw" style="left:787.5px;top:692px;width:100px;text-align:right;font-size:12px;color:#4a4a4a;line-height:16px;letter-spacing:0.6px;transform-origin:100% 50%;transform:rotate(-40deg)">2025年7月</div>
<div class="a nw" style="left:852.1px;top:692px;width:100px;text-align:right;font-size:12px;color:#4a4a4a;line-height:16px;letter-spacing:0.6px;transform-origin:100% 50%;transform:rotate(-40deg)">2025年8月</div>
<div class="a nw" style="left:916.7px;top:692px;width:100px;text-align:right;font-size:12px;color:#4a4a4a;line-height:16px;letter-spacing:0.6px;transform-origin:100% 50%;transform:rotate(-40deg)">2025年9月</div>
<div class="a nw" style="left:981.3px;top:692px;width:100px;text-align:right;font-size:12px;color:#4a4a4a;line-height:16px;letter-spacing:0.6px;transform-origin:100% 50%;transform:rotate(-40deg)">2025年10月</div>
<div class="a nw" style="left:1045.9px;top:692px;width:100px;text-align:right;font-size:12px;color:#4a4a4a;line-height:16px;letter-spacing:0.6px;transform-origin:100% 50%;transform:rotate(-40deg)">2025年11月</div>
<svg class="a" style="left:1257px;top:505px" width="16" height="16" viewBox="0 0 15 15" fill="none" stroke="#6b7fcc" stroke-width="1"><path d="M0.5 5.5h2l2-5 2.5 9 1.5-4.5 1.5 2.5h4.5" /><path d="M0.5 14h14" stroke-width="1.5"/></svg>
<svg class="a" style="left:1257px;top:534px" width="16" height="16" viewBox="0 0 15 15" fill="none" stroke="#6b7fcc" stroke-width="1"><rect x="1" y="8" width="3" height="5"/><rect x="6" y="5" width="3" height="8"/><rect x="11" y="1" width="3" height="12"/><path d="M0.5 15h14" stroke-width="1.5"/></svg>
<svg class="a" style="left:1257px;top:564px" width="16" height="16" viewBox="0 0 15 15" fill="none" stroke="#6b7fcc" stroke-width="1"><path d="M7.5 1L14 4.5 7.5 8 1 4.5z"/><path d="M1 6.5l6.5 3.5 6.5-3.5M1 8.5l6.5 3.5 6.5-3.5M1 10.5l6.5 3.5 6.5-3.5"/><path d="M1 4.5v6M14 4.5v6"/></svg>
<svg class="a" style="left:1257px;top:593px" width="16" height="16" viewBox="0 0 16 16" fill="none" stroke="#6b7fcc" stroke-width="1"><path d="M0.7 8A7.3 7.3 0 0 1 14.32 4.35"/><path d="M14.96 2.25L14.92 5.39 12.18 3.85z" fill="#6b7fcc" stroke="none"/><path d="M15.3 8A7.3 7.3 0 0 1 1.68 11.65"/><path d="M1.04 13.75L1.08 10.61 3.82 12.15z" fill="#6b7fcc" stroke="none"/></svg>
<svg class="a" style="left:1257px;top:623px" width="16" height="16" viewBox="0 0 16 16" fill="none" stroke="#6b7fcc" stroke-width="1"><path d="M8 0.5v11M1.2 6L8 11.5 14.8 6"/><path d="M1.3 11.5V15.3H14.7V11.5"/></svg>
<div class="card" style="left:1324px;top:293px;width:578px;height:498px"></div>
<div class="a" style="left:1324px;top:348px;width:578px;height:1px;background:#f0f0f0"></div>
<svg class="a" style="left:1348px;top:310px" width="16" height="17" viewBox="0 0 16 17" fill="none" stroke="#1f1f1f" stroke-width="1.3"><path d="M7 3.5A6.2 6.2 0 1 0 13.2 9.8H7z"/><path d="M9.3 1v6.3h6.2A6.2 6.2 0 0 0 9.3 1z"/></svg>
<div class="a nw" style="left:1387px;top:307px;font-size:16px;font-weight:bold;color:#1f1f1f;line-height:22px">业务类型占比</div>
<div class="a nw" style="left:1792px;top:310px;font-size:14px;color:#1890ff;line-height:20px">隐藏占比图</div>
<div class="a nw" style="left:1513px;top:373px;width:200px;text-align:center;font-size:18px;font-weight:bold;color:#464646;line-height:24px">业务类型占比</div>
<div class="lg" style="left:1355px;top:457px"><i style="background:#5070dd;width:23px;height:12px;top:1px"></i><span style="left:29px">投诉</span></div>
<div class="lg" style="left:1355px;top:481px"><i style="background:#b6d634;width:23px;height:12px;top:1px"></i><span style="left:29px">个人</span></div>
<div class="lg" style="left:1355px;top:505px"><i style="background:#505372;width:23px;height:12px;top:1px"></i><span style="left:29px">其他业务受理</span></div>
<div class="lg" style="left:1355px;top:529px"><i style="background:#ff994d;width:23px;height:12px;top:1px"></i><span style="left:29px">企业</span></div>
<div class="lg" style="left:1355px;top:553px"><i style="background:#0ca8df;width:23px;height:12px;top:1px"></i><span style="left:29px">其他服务咨询</span></div>
<div class="lg" style="left:1355px;top:577px"><i style="background:#ffd10a;width:23px;height:12px;top:1px"></i><span style="left:29px">进线挂断/无音</span></div>
<div class="lg" style="left:1355px;top:601px"><i style="background:#fb628b;width:23px;height:12px;top:1px"></i><span style="left:29px">其他</span></div>
<svg class="a" style="left:0;top:0" width="1920" height="1080" viewBox="0 0 1920 1080"><path d="M1638.00 474.41L1638.00 421.27A9 9 0 0 1 1647.54 412.28A160 160 0 0 1 1794.23 537.48A9 9 0 0 1 1786.86 548.31L1734.37 556.66A9 9 0 0 1 1724.24 550.00A89 89 0 0 0 1646.17 483.38A9 9 0 0 1 1638.00 474.41Z" fill="#5070dd" stroke="#fff" stroke-width="2"/><path d="M1734.37 556.66L1786.86 548.31A9 9 0 0 1 1797.23 556.32A160 160 0 0 1 1566.27 715.02A9 9 0 0 1 1562.51 702.47L1589.13 656.47A9 9 0 0 1 1600.69 652.80A89 89 0 0 0 1726.81 566.14A9 9 0 0 1 1734.37 556.66Z" fill="#b6d634" stroke="#fff" stroke-width="2"/><path d="M1589.13 656.47L1562.51 702.47A9 9 0 0 1 1549.76 705.47A160 160 0 0 1 1499.31 651.78A9 9 0 0 1 1503.10 639.24L1550.66 615.53A9 9 0 0 1 1562.33 618.85A89 89 0 0 0 1586.54 644.62A9 9 0 0 1 1589.13 656.47Z" fill="#505372" stroke="#fff" stroke-width="2"/><path d="M1550.66 615.53L1503.10 639.24A9 9 0 0 1 1490.80 634.71A160 160 0 0 1 1492.00 506.54A9 9 0 0 1 1504.38 502.25L1551.49 526.84A9 9 0 0 1 1555.65 538.23A89 89 0 0 0 1555.04 604.22A9 9 0 0 1 1550.66 615.53Z" fill="#ff994d" stroke="#fff" stroke-width="2"/><path d="M1551.49 526.84L1504.38 502.25A9 9 0 0 1 1500.83 489.63A160 160 0 0 1 1535.73 448.95A9 9 0 0 1 1548.74 450.54L1580.21 493.37A9 9 0 0 1 1578.93 505.43A89 89 0 0 0 1563.22 523.74A9 9 0 0 1 1551.49 526.84Z" fill="#0ca8df" stroke="#fff" stroke-width="2"/><path d="M1580.63 493.06L1549.39 450.07A9 9 0 0 1 1551.82 437.19A160 160 0 0 1 1628.46 412.28A9 9 0 0 1 1638.00 421.27L1638.00 474.41A9 9 0 0 1 1629.83 483.38A89 89 0 0 0 1592.51 495.50A9 9 0 0 1 1580.63 493.06Z" fill="#fb628b" stroke="#fff" stroke-width="2"/></svg>
<svg class="a" style="left:1845px;top:549px" width="16" height="16" viewBox="0 0 16 16" fill="none" stroke="#6b7fcc" stroke-width="1"><path d="M0.7 8A7.3 7.3 0 0 1 14.32 4.35"/><path d="M14.96 2.25L14.92 5.39 12.18 3.85z" fill="#6b7fcc" stroke="none"/><path d="M15.3 8A7.3 7.3 0 0 1 1.68 11.65"/><path d="M1.04 13.75L1.08 10.61 3.82 12.15z" fill="#6b7fcc" stroke="none"/></svg>
<svg class="a" style="left:1845px;top:579px" width="16" height="16" viewBox="0 0 16 16" fill="none" stroke="#6b7fcc" stroke-width="1"><path d="M8 0.5v11M1.2 6L8 11.5 14.8 6"/><path d="M1.3 11.5V15.3H14.7V11.5"/></svg>
<div class="a" style="left:230px;top:801px;width:1672px;height:269px;background:#fff;border-radius:4px 4px 4px 4px;overflow:hidden">
</div>
<svg class="a" style="left:255px;top:822px" width="16" height="14" viewBox="0 0 16 14" fill="none" stroke="#1f1f1f" stroke-width="1.3"><path d="M5 1.5h10M5 7h10M5 12.5h10"/><path d="M1 1.5h1.3M1 7h1.3M1 12.5h1.3" stroke-width="1.6"/></svg>
<div class="a nw" style="left:294px;top:818px;font-size:16px;font-weight:bold;color:#1f1f1f;line-height:22px">业务类型统计列表</div>
<svg class="a" style="left:1816px;top:822px" width="12" height="12" viewBox="0 0 12 12" fill="none" stroke="#1890ff" stroke-width="1.1"><path d="M6 1v8M2.8 6L6 9.2 9.2 6M0.5 11.3h11"/></svg>
<div class="a nw" style="left:1835px;top:818px;font-size:14px;color:#1890ff;line-height:20px">导出</div>
<div class="a" style="left:230px;top:856px;width:1672px;height:39px;background:#fafafa;border-bottom:1px solid #f0f0f0"></div>
<div class="th" style="left:230px;width:50.5px">序号</div>
<div class="th" style="left:280.5px;width:202.75px">时间</div>
<div class="a" style="left:280.0px;top:866px;width:1px;height:18px;background:#ececec"></div>
<div class="th" style="left:483.25px;width:202.75px">投诉</div>
<div class="a" style="left:482.75px;top:866px;width:1px;height:18px;background:#ececec"></div>
<div class="th" style="left:686.0px;width:202.75px">个人</div>
<div class="a" style="left:685.5px;top:866px;width:1px;height:18px;background:#ececec"></div>
<div class="th" style="left:888.75px;width:202.75px">其他业务受理</div>
<div class="a" style="left:888.25px;top:866px;width:1px;height:18px;background:#ececec"></div>
<div class="th" style="left:1091.5px;width:202.75px">企业</div>
<div class="a" style="left:1091.0px;top:866px;width:1px;height:18px;background:#ececec"></div>
<div class="th" style="left:1294.25px;width:202.75px">其他服务咨询</div>
<div class="a" style="left:1293.75px;top:866px;width:1px;height:18px;background:#ececec"></div>
<div class="th" style="left:1497.0px;width:202.75px">进线挂断/无音</div>
<div class="a" style="left:1496.5px;top:866px;width:1px;height:18px;background:#ececec"></div>
<div class="th" style="left:1699.75px;width:202.75px">其他</div>
<div class="a" style="left:1699.25px;top:866px;width:1px;height:18px;background:#ececec"></div>
<div class="a" style="left:230px;top:895px;width:1672px;height:175px;overflow:hidden;border-radius:0 0 4px 4px">
<div class="a" style="left:0;top:0px;width:1672px;height:39px;background:#fff;border-bottom:1px solid #f0f0f0"></div>
<div class="td" style="left:0px;top:0px;width:50.5px">1</div>
<div class="td" style="left:50.5px;top:0px;width:202.75px">2024年12月</div>
<div class="td" style="left:253.25px;top:0px;width:202.75px">351</div>
<div class="td" style="left:456.0px;top:0px;width:202.75px">656</div>
<div class="td" style="left:658.75px;top:0px;width:202.75px">119</div>
<div class="td" style="left:861.5px;top:0px;width:202.75px">202</div>
<div class="td" style="left:1064.25px;top:0px;width:202.75px">102</div>
<div class="td" style="left:1267.0px;top:0px;width:202.75px">1</div>
<div class="td" style="left:1469.75px;top:0px;width:202.75px">161</div>
<div class="a" style="left:0;top:39px;width:1672px;height:39px;background:#eff3f8;border-bottom:1px solid #f0f0f0"></div>
<div class="td" style="left:0px;top:39px;width:50.5px">2</div>
<div class="td" style="left:50.5px;top:39px;width:202.75px">2025年1月</div>
<div class="td" style="left:253.25px;top:39px;width:202.75px">384</div>
<div class="td" style="left:456.0px;top:39px;width:202.75px">614</div>
<div class="td" style="left:658.75px;top:39px;width:202.75px">110</div>
<div class="td" style="left:861.5px;top:39px;width:202.75px">217</div>
<div class="td" style="left:1064.25px;top:39px;width:202.75px">119</div>
<div class="td" style="left:1267.0px;top:39px;width:202.75px">2</div>
<div class="td" style="left:1469.75px;top:39px;width:202.75px">106</div>
<div class="a" style="left:0;top:78px;width:1672px;height:39px;background:#fff;border-bottom:1px solid #f0f0f0"></div>
<div class="td" style="left:0px;top:78px;width:50.5px">3</div>
<div class="td" style="left:50.5px;top:78px;width:202.75px">2025年2月</div>
<div class="td" style="left:253.25px;top:78px;width:202.75px">317</div>
<div class="td" style="left:456.0px;top:78px;width:202.75px">653</div>
<div class="td" style="left:658.75px;top:78px;width:202.75px">127</div>
<div class="td" style="left:861.5px;top:78px;width:202.75px">296</div>
<div class="td" style="left:1064.25px;top:78px;width:202.75px">107</div>
<div class="td" style="left:1267.0px;top:78px;width:202.75px">0</div>
<div class="td" style="left:1469.75px;top:78px;width:202.75px">188</div>
<div class="a" style="left:0;top:117px;width:1672px;height:39px;background:#eff3f8;border-bottom:1px solid #f0f0f0"></div>
<div class="td" style="left:0px;top:117px;width:50.5px">4</div>
<div class="td" style="left:50.5px;top:117px;width:202.75px">2025年3月</div>
<div class="td" style="left:253.25px;top:117px;width:202.75px">339</div>
<div class="td" style="left:456.0px;top:117px;width:202.75px">687</div>
<div class="td" style="left:658.75px;top:117px;width:202.75px">183</div>
<div class="td" style="left:861.5px;top:117px;width:202.75px">220</div>
<div class="td" style="left:1064.25px;top:117px;width:202.75px">98</div>
<div class="td" style="left:1267.0px;top:117px;width:202.75px">2</div>
<div class="td" style="left:1469.75px;top:117px;width:202.75px">158</div>
<div class="a" style="left:0;top:156px;width:1672px;height:39px;background:#fff;border-bottom:1px solid #f0f0f0"></div>
<div class="td" style="left:0px;top:156px;width:50.5px">5</div>
<div class="td" style="left:50.5px;top:156px;width:202.75px">2025年4月</div>
<div class="td" style="left:253.25px;top:156px;width:202.75px">362</div>
<div class="td" style="left:456.0px;top:156px;width:202.75px">694</div>
<div class="td" style="left:658.75px;top:156px;width:202.75px">168</div>
<div class="td" style="left:861.5px;top:156px;width:202.75px">239</div>
<div class="td" style="left:1064.25px;top:156px;width:202.75px">27</div>
<div class="td" style="left:1267.0px;top:156px;width:202.75px">3</div>
<div class="td" style="left:1469.75px;top:156px;width:202.75px">156</div>
</div>
</body></html>
